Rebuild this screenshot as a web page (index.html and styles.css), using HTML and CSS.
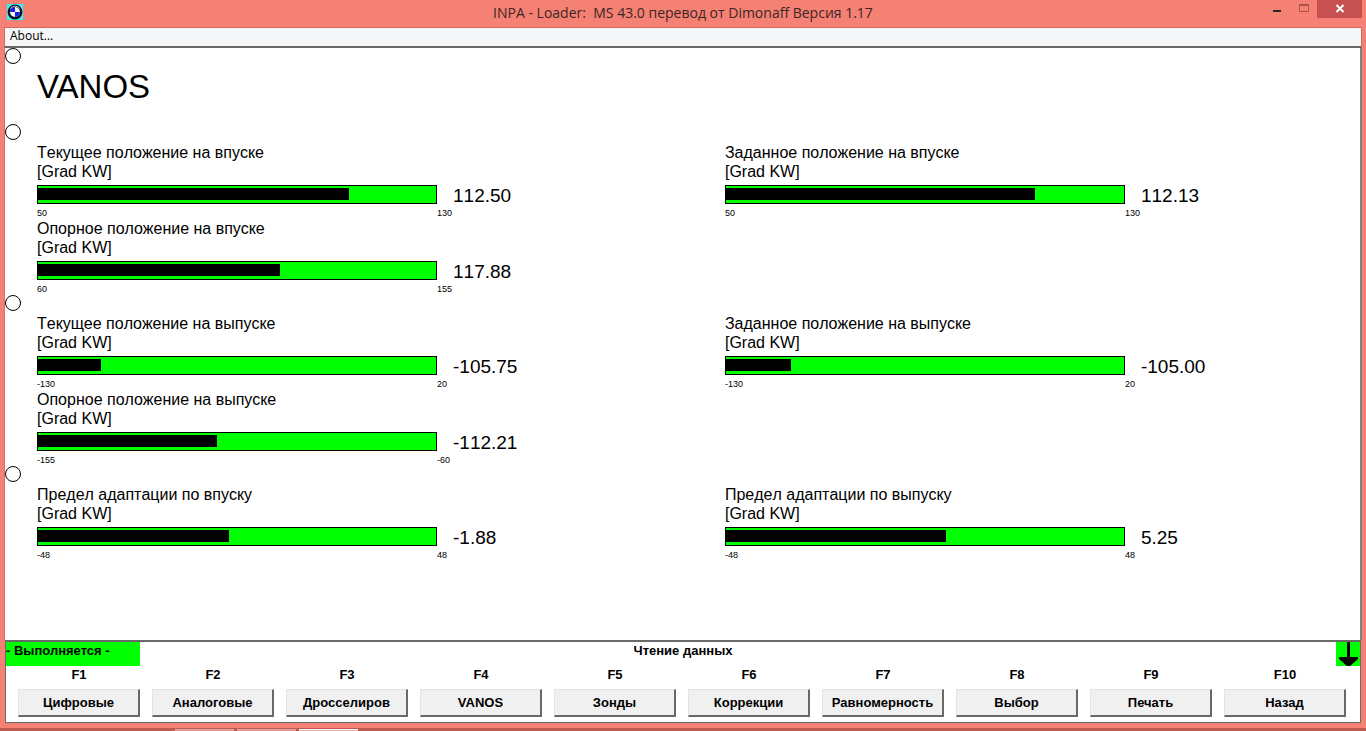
FILE: index.html
```
<!DOCTYPE html>
<html lang="ru">
<head>
<meta charset="utf-8">
<title>INPA - Loader: MS 43.0</title>
<link rel="stylesheet" href="styles.css">
</head>
<body>
<div class="window">
  <header class="titlebar">
    <svg class="logo" viewBox="0 0 16 16" aria-hidden="true">
      <rect width="16" height="16" fill="#2ef4fa"/>
      <circle cx="8" cy="8" r="7.4" fill="#101018"/>
      <path d="M3.200 4.500A6 6 0 0 1 12.800 4.500" fill="none" stroke="#b8b8c0" stroke-width="1"/>
      <circle cx="8" cy="8" r="5" fill="#f4f4ff"/>
      <path d="M8 8V3A5 5 0 0 0 3 8ZM8 8v5A5 5 0 0 0 13 8Z" fill="#1420e0"/>
    </svg>
    <h1 class="caption">INPA - Loader:&nbsp; MS 43.0 перевод от Dimonaff Версия 1.17</h1>
    <div class="controls">
      <button class="control" aria-label="Minimize"><svg viewBox="0 0 26 18" width="26" height="18"><path d="M10 10h8v2h-8z" fill="#262626"/></svg></button>
      <button class="control" aria-label="Maximize"><svg viewBox="0 0 28 18" width="28" height="18"><path d="M10.500 5h9v6.500h-9z" fill="none" stroke="#a9554d"/><path d="M10 5h10" stroke="#a9554d" stroke-width="2"/></svg></button>
      <button class="control close" aria-label="Close"><svg viewBox="0 0 45 18" width="45" height="18"><path d="M19.500 5l7 7M26.500 5l-7 7" stroke="#fff" stroke-width="2"/></svg></button>
    </div>
  </header>
  <nav class="menu"><button class="menu-item">About...</button></nav>

  <main class="screen">
    <section class="group heading"><i class="marker"></i><h2 class="title">VANOS</h2></section>

    <section class="group"><i class="marker"></i>
      <div class="gauges">
        <div class="gauge"><p class="name">Текущее положение на впуске<br>[Grad KW]</p><div class="bar"><div class="fill" style="width:78.1%"></div></div><output class="value">112.50</output><span class="limit">50</span><span class="limit">130</span></div>
        <div class="gauge"><p class="name">Заданное положение на впуске<br>[Grad KW]</p><div class="bar"><div class="fill" style="width:77.6%"></div></div><output class="value">112.13</output><span class="limit">50</span><span class="limit">130</span></div>
        <div class="gauge"><p class="name">Опорное положение на впуске<br>[Grad KW]</p><div class="bar"><div class="fill" style="width:60.9%"></div></div><output class="value">117.88</output><span class="limit">60</span><span class="limit">155</span></div>
      </div>
    </section>

    <section class="group"><i class="marker"></i>
      <div class="gauges">
        <div class="gauge"><p class="name">Текущее положение на выпуске<br>[Grad KW]</p><div class="bar"><div class="fill" style="width:15.9%"></div></div><output class="value">-105.75</output><span class="limit">-130</span><span class="limit">20</span></div>
        <div class="gauge"><p class="name">Заданное положение на выпуске<br>[Grad KW]</p><div class="bar"><div class="fill" style="width:16.4%"></div></div><output class="value">-105.00</output><span class="limit">-130</span><span class="limit">20</span></div>
        <div class="gauge"><p class="name">Опорное положение на выпуске<br>[Grad KW]</p><div class="bar"><div class="fill" style="width:45%"></div></div><output class="value">-112.21</output><span class="limit">-155</span><span class="limit">-60</span></div>
      </div>
    </section>

    <section class="group"><i class="marker"></i>
      <div class="gauges">
        <div class="gauge"><p class="name">Предел адаптации по впуску<br>[Grad KW]</p><div class="bar"><div class="fill" style="width:48%"></div></div><output class="value">-1.88</output><span class="limit">-48</span><span class="limit">48</span></div>
        <div class="gauge"><p class="name">Предел адаптации по выпуску<br>[Grad KW]</p><div class="bar"><div class="fill" style="width:55.3%"></div></div><output class="value">5.25</output><span class="limit">-48</span><span class="limit">48</span></div>
      </div>
    </section>
  </main>

  <footer class="panel">
    <div class="status">
      <span class="state">- Выполняется -</span>
      <span class="message">Чтение данных</span>
      <svg class="arrow" viewBox="0 0 24 24" width="24" height="24" aria-hidden="true"><rect width="24" height="24" fill="#0f0"/><path d="M11 0h3v15h8v2l-8 7h-3l-8-7v-2h8z" fill="#000"/></svg>
    </div>
    <div class="keys">
      <div class="key"><label for="f1">F1</label><button id="f1">Цифровые</button></div>
      <div class="key"><label for="f2">F2</label><button id="f2">Аналоговые</button></div>
      <div class="key"><label for="f3">F3</label><button id="f3">Дросселиров</button></div>
      <div class="key"><label for="f4">F4</label><button id="f4">VANOS</button></div>
      <div class="key"><label for="f5">F5</label><button id="f5">Зонды</button></div>
      <div class="key"><label for="f6">F6</label><button id="f6">Коррекции</button></div>
      <div class="key"><label for="f7">F7</label><button id="f7">Равномерность</button></div>
      <div class="key"><label for="f8">F8</label><button id="f8">Выбор</button></div>
      <div class="key"><label for="f9">F9</label><button id="f9">Печать</button></div>
      <div class="key"><label for="f10">F10</label><button id="f10">Назад</button></div>
    </div>
  </footer>
</div>
<div class="taskbar"><span class="task"></span><span class="task"></span><span class="task active"></span></div>
</body>
</html>
```
FILE: styles.css
```
* { box-sizing: border-box; }

body {
  margin: 0;
  min-height: 100vh;
  display: flex;
  flex-direction: column;
  background: #f58175;
  color: #000;
  font-family: "Liberation Sans", Arial, sans-serif;
}

button { font: inherit; color: inherit; border: 0; padding: 0; background: none; }
h1, h2, p { margin: 0; font-weight: normal; }

.window {
  flex: 1;
  display: flex;
  flex-direction: column;
  padding: 0 4px 5px;
}

/* Title bar */
.titlebar {
  display: grid;
  grid-template-columns: 100px 1fr 100px;
  height: 27px;
}
.logo { width: 16px; height: 16px; margin: 4px 3px; }
.caption {
  font-family: "Open Sans", "Noto Sans", sans-serif;
  font-size: 14px;
  line-height: 26px;
  text-align: center;
  color: #3c2624;
}
.controls { display: flex; justify-content: flex-end; align-items: flex-start; }
.control { display: flex; height: 18px; }
.close { background: #c75050; }

.menu {
  height: 21px;
  background: #f5f6f7;
  border: 1px solid #cf6b62;
  border-bottom: 2px solid #696969;
  padding: 0 5px;
}
.menu-item {
  display: block;
  font-family: "Open Sans", "Noto Sans", sans-serif;
  font-size: 12px;
  line-height: 16px;
}

/* Measurement screen */
.screen {
  flex: 1;
  background: #fff;
  border-left: 1px solid #d96f65;
  border-right: 2px solid #808080;
}
.group { position: relative; padding: 19px 0 0 32px; }
.heading { height: 76px; }
.marker {
  position: absolute;
  left: 0;
  top: 0;
  width: 16px;
  height: 16px;
  border: 1px solid #000;
  border-radius: 50%;
}
.title { font-size: 33px; line-height: 40px; }
.gauges { display: grid; grid-template-columns: 52fr 48fr; }
.gauge {
  display: grid;
  grid-template-columns: 400px 1fr;
  grid-template-rows: 42px 19px 15px;
}
.name { grid-column: 1 / -1; font-size: 16px; line-height: 19px; font-kerning: none; }
.bar { border: 1px solid #000; background: #0f0; padding: 2px 0 3px; }
.fill { height: 12px; background: #000; }
.value { padding-left: 16px; font-size: 19px; line-height: 22px; font-kerning: none; }
.limit { font-size: 9px; line-height: 18px; }

/* Status line and function keys */
.panel {
  margin: 0 1px;
  background: #fff;
  border: 1px solid #696969;
  border-top-width: 2px;
  font-size: 13px;
  font-weight: bold;
}
.status { display: grid; grid-template-columns: 134px 1fr 134px; height: 24px; }
.state { background: #0f0; line-height: 18px; }
.message { text-align: center; line-height: 18px; }
.arrow { justify-self: end; }
.keys {
  display: grid;
  grid-template-columns: repeat(10, 1fr);
  gap: 12px;
  padding: 0 14px 5px 12px;
}
.key { display: flex; flex-direction: column; }
.key label { height: 23px; line-height: 17px; text-align: center; }
.key button {
  height: 28px;
  background: #f0f0f0;
  border: 1px solid #e3e3e3;
  border-right: 2px solid #696969;
  border-bottom: 2px solid #696969;
}

/* Top edge of the desktop taskbar */
.taskbar {
  display: flex;
  gap: 3px;
  height: 3px;
  padding: 1px 0 0 175px;
  background: #bd5b51;
}
.task { width: 59px; background: #d98d86; border-top: 1px solid #e9aaa4; }
.active { background: #e9b0aa; border-color: #fff; }
```
